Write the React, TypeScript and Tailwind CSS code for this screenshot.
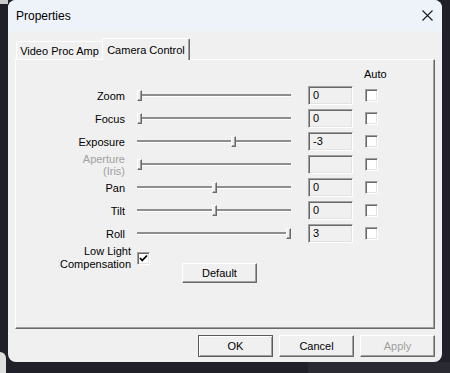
import React from "react";

const F = "font-['Liberation_Sans',Arial,sans-serif]";

type Row = { label: string[]; pos: number; value: string; disabled?: boolean };

const rows: Row[] = [
  { label: ["Zoom"], pos: 0, value: "0" },
  { label: ["Focus"], pos: 0, value: "0" },
  { label: ["Exposure"], pos: 94, value: "-3" },
  { label: ["Aperture", "(Iris)"], pos: 0, value: "", disabled: true },
  { label: ["Pan"], pos: 75, value: "0" },
  { label: ["Tilt"], pos: 75, value: "0" },
  { label: ["Roll"], pos: 149, value: "3" },
];

function Slider({ pos }: { pos: number }) {
  return (
    <div className="relative w-[154px] h-[23px] ml-[12px]">
      <div className="absolute left-0 right-0 top-[10px] h-[3px] bg-[#8e8e8e] border-b border-white" />
      <div
        className="absolute top-[6px] w-[5px] h-[11px] bg-[#f0f0f0] border-l border-t border-white border-r border-b border-r-[#696969] border-b-[#696969] shadow-[inset_-1px_-1px_0_#a0a0a0]"
        style={{ left: pos }}
      />
    </div>
  );
}

function Sunken({ className, children }: { className: string; children?: React.ReactNode }) {
  return (
    <div
      className={
        "border border-t-[#a0a0a0] border-l-[#a0a0a0] border-r-white border-b-white shadow-[inset_1px_1px_0_#696969,inset_-1px_-1px_0_#e3e3e3] " +
        className
      }
    >
      {children}
    </div>
  );
}

function Btn({ children, def, disabled, w }: { children: React.ReactNode; def?: boolean; disabled?: boolean; w: string }) {
  return (
    <div
      className={
        "h-full flex items-center justify-center text-[11px] bg-[#f0f0f0] border " +
        (def
          ? "border-[#5a5a5a] shadow-[inset_1px_1px_0_#fff,inset_-1px_-1px_0_#a0a0a0] "
          : "border-t-white border-l-white border-r-[#696969] border-b-[#696969] shadow-[inset_-1px_-1px_0_#a0a0a0] ") +
        (disabled ? "text-[#a0a0a0] " : "text-black ") +
        w
      }
    >
      {children}
    </div>
  );
}

export default function App() {
  return (
    <div className={"w-[450px] h-[373px] bg-[#202128] relative overflow-hidden " + F}>
      <div className="absolute left-0 top-0 w-[8px] h-[4px] bg-[#c9c9c9]" />
      <div className="absolute left-[-8px] top-[352px] w-[14px] h-[30px] rounded-tr-[6px] bg-[#dedede]" />
      <div className="absolute left-[308px] top-[362px] w-[142px] h-[11px] bg-[#2a2b32]" />
      <div className="absolute left-[8px] top-0 w-[434px] h-[362px] rounded-[8px] overflow-hidden flex flex-col bg-[#f0f0f0]">
        <div className="h-[31px] bg-[#eef2f9] flex items-center justify-between pl-[8px] pr-[9px]">
          <span className="text-[12px] text-black">Properties</span>
          <svg width="11" height="11" viewBox="0 0 11 11">
            <path d="M0.5 0.5 L10.5 10.5 M10.5 0.5 L0.5 10.5" stroke="#1a1a1a" strokeWidth="1.1" fill="none" />
          </svg>
        </div>
        <div className="flex flex-col px-[7px] pt-[7px]">
          <div className="h-[21px] flex items-end pl-[1px] text-[11px] text-black">
            <div className="w-[86px] h-[18px] border-t border-l border-white flex items-center justify-center pt-[1px] rounded-tl-[2px]">
              Video Proc Amp
            </div>
            <div className="relative z-10 w-[88px] h-[22px] -mb-[1px] bg-[#f0f0f0] border-t border-l border-white border-r border-r-[#696969] shadow-[inset_-1px_0_0_#a0a0a0] flex items-start justify-center pt-[3px] rounded-t-[2px]">
              Camera Control
            </div>
          </div>
          <div className="h-[270px] border border-t-white border-l-white border-r-[#696969] border-b-[#696969] shadow-[inset_-1px_-1px_0_#a0a0a0] pt-[8px] text-[11px] text-black">
            <div className="h-[13px] flex items-center pl-[348px] leading-[13px]">Auto</div>
            <div className="mt-[3px] flex flex-col">
              {rows.map((r, i) => (
                <div key={i} className="h-[23px] flex items-center">
                  <div
                    className={
                      "w-[109px] text-right leading-[12px] " + (r.disabled ? "text-[#a0a0a0]" : "text-black")
                    }
                  >
                    {r.label.map((l, j) => (
                      <div key={j}>{l}</div>
                    ))}
                  </div>
                  <Slider pos={r.pos} />
                  <Sunken className="ml-[17px] w-[45px] h-[19px] bg-[#f0f0f0] pl-[4px] flex items-center leading-none">
                    {r.value}
                  </Sunken>
                  <Sunken className="ml-[12px] w-[13px] h-[13px] bg-white" />
                </div>
              ))}
            </div>
            <div className="flex items-start">
              <div className="w-[115px] text-right leading-[13px]">
                <div>Low Light</div>
                <div>Compensation</div>
              </div>
              <Sunken className="ml-[6px] mt-[7px] w-[13px] h-[13px] bg-white flex items-center justify-center">
                <svg width="9" height="9" viewBox="0 0 9 9">
                  <path d="M1 4 L3.2 6.5 L8 1.5" stroke="#000" strokeWidth="1.8" fill="none" />
                </svg>
              </Sunken>
              <div className="ml-[32px] mt-[18px] h-[20px]">
                <Btn w="w-[75px]">Default</Btn>
              </div>
            </div>
          </div>
          <div className="mt-[6px] h-[22px] flex justify-end gap-[6px]">
            <Btn def w="w-[75px]">OK</Btn>
            <Btn w="w-[75px]">Cancel</Btn>
            <Btn disabled w="w-[75px]">Apply</Btn>
          </div>
        </div>
      </div>
    </div>
  );
}
